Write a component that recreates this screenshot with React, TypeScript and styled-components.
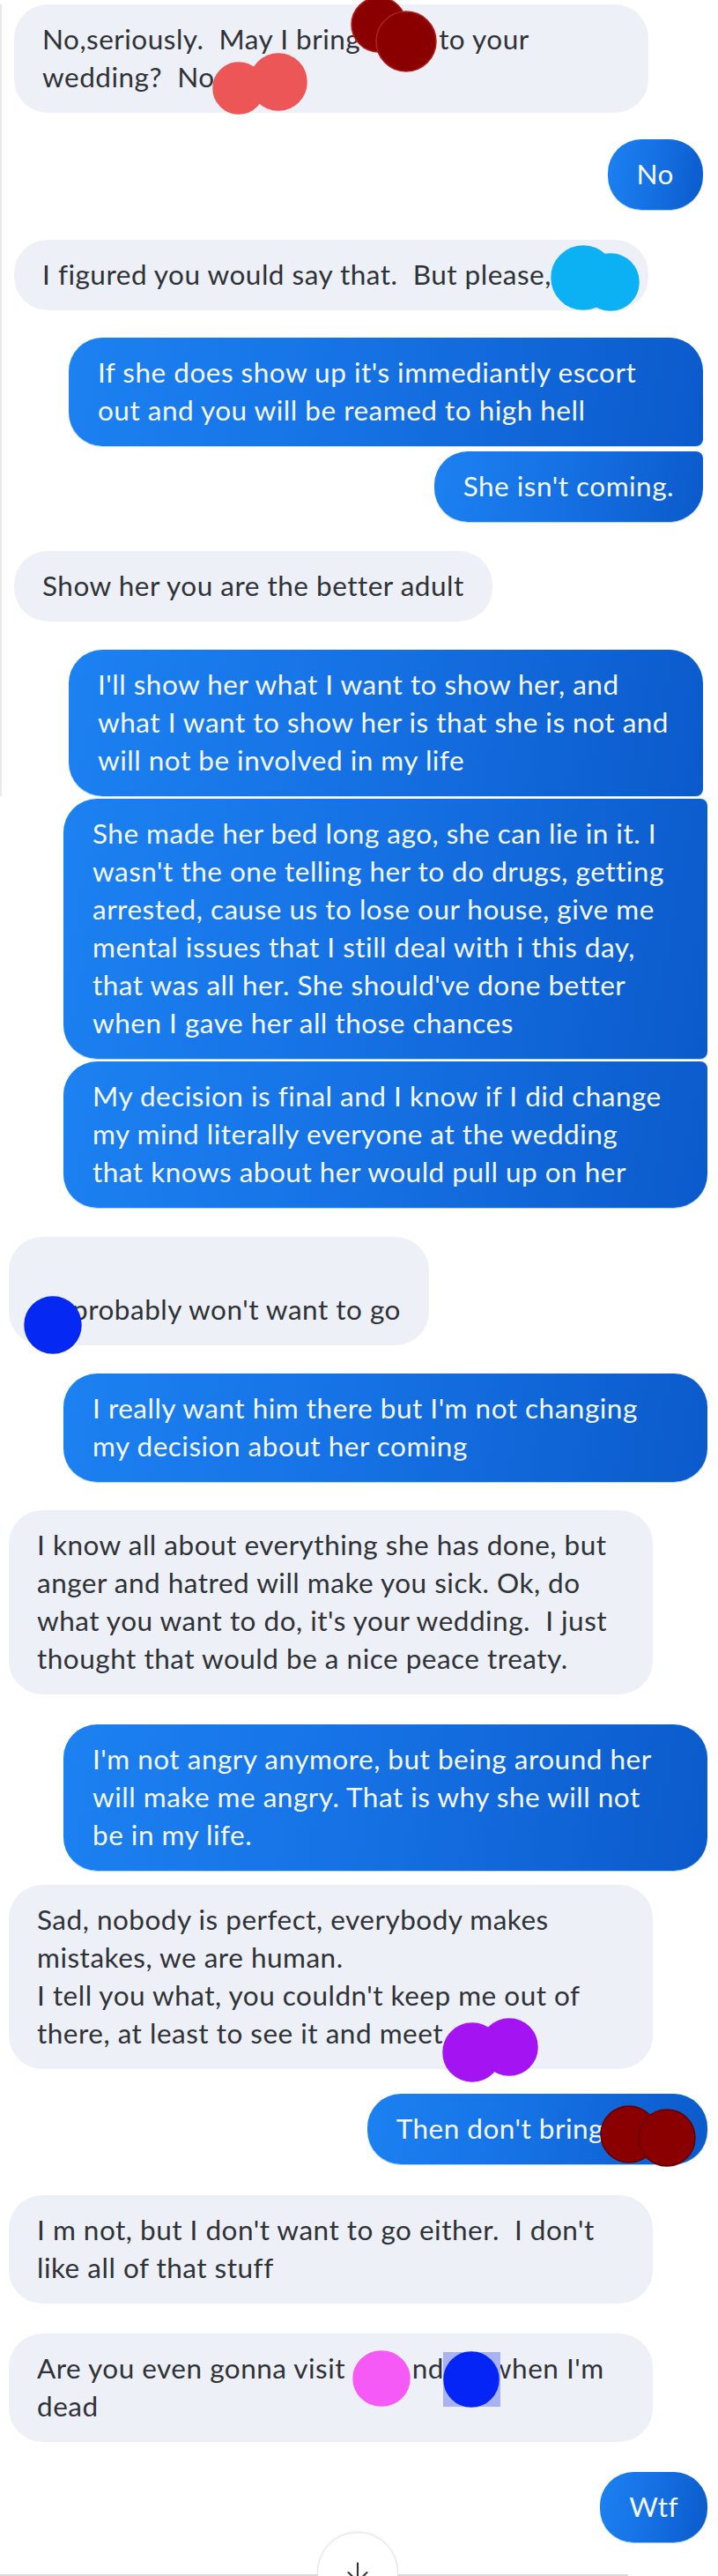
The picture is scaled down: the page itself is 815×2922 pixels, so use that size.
import React from 'react';
import styled, { createGlobalStyle } from 'styled-components';

const GlobalStyle = createGlobalStyle`
    html, body {
        margin: 0;
        padding: 0;
        background: #ffffff;
    }
    body {
        font-family: Lato, "Liberation Sans", sans-serif;
    }
`;

const Page = styled.div`
    width: 815px;
    height: 2922px;
    overflow: hidden;
    background: #ffffff;
    display: flex;
    flex-direction: column;
    padding-top: 5px;
    box-sizing: border-box;
`;

const Section = styled.section<{ $left: number; $right: number; $edge?: boolean }>`
    display: flex;
    flex-direction: column;
    padding: 0 ${(p) => p.$right}px 0 ${(p) => p.$left}px;
    box-shadow: ${(p) => (p.$edge ? 'inset 2px 0 0 #e9e9e9' : 'none')};
`;

const Row = styled.div<{ $out?: boolean; $gap: number }>`
    display: flex;
    justify-content: ${(p) => (p.$out ? 'flex-end' : 'flex-start')};
    margin-top: ${(p) => p.$gap}px;
`;

type Pos = 'single' | 'first' | 'middle' | 'last';

const corners: Record<Pos, string> = {
    single: '38px',
    first: '38px 38px 8px 38px',
    middle: '38px 8px 8px 38px',
    last: '38px 8px 38px 38px',
};

const Bubble = styled.div<{ $out?: boolean; $full?: boolean; $pos: Pos }>`
    position: relative;
    box-sizing: border-box;
    width: ${(p) => (p.$full ? 'calc(100% - 62px)' : 'auto')};
    padding: 18px ${(p) => (p.$out ? '33px' : '32px')} 19px;
    border-radius: ${(p) => corners[p.$pos]};
    background: ${(p) =>
        p.$out
            ? 'linear-gradient(100deg, #1c81f1 0%, #1672e4 45%, #0b5acb 100%)'
            : '#eef0f7'};
    box-shadow: ${(p) => (p.$out ? '0 1px 0 rgba(140, 200, 255, 0.7)' : 'none')};
    color: ${(p) => (p.$out ? '#f3f8ff' : '#2f3236')};
    font-size: 31.5px;
    letter-spacing: 0.5px;
    line-height: 43px;
`;

const Line = styled.div`
    white-space: pre;
`;

const Mark = styled.span<{ $w: number }>`
    display: inline-block;
    position: relative;
    width: ${(p) => p.$w}px;
    height: 0;
    vertical-align: top;
`;

const Scribble = styled.svg`
    position: absolute;
    left: 0;
    top: 0;
    overflow: visible;
    z-index: 1;
`;

type Dot = { x: number; y: number; r: number; ry?: number };

interface RedactProps {
    w: number;
    color: string;
    edge?: string;
    dots: Dot[];
    box?: { x: number; y: number; w: number; h: number };
}

const Redact: React.FC<RedactProps> = ({ w, color, edge, dots, box }) => (
    <Mark $w={w}>
        <Scribble width="1" height="1">
            {box && <rect x={box.x} y={box.y} width={box.w} height={box.h} fill="#aab3f1" />}
            {dots.map((d, i) => (
                <ellipse
                    key={i}
                    cx={d.x}
                    cy={d.y}
                    rx={d.r}
                    ry={d.ry ?? d.r}
                    fill={color}
                    stroke={edge ?? color}
                    strokeWidth={1.5}
                />
            ))}
        </Scribble>
    </Mark>
);

const Footer = styled.div`
    position: relative;
    flex: 1;
    display: flex;
    align-items: flex-end;
`;

const Rule = styled.div`
    width: 713px;
    height: 2px;
    background: #dadada;
`;

const ScrollButton = styled.div`
    position: absolute;
    left: 360px;
    top: -12px;
    width: 92px;
    height: 92px;
    box-sizing: border-box;
    border-radius: 50%;
    background: #ffffff;
    border: 1px solid #e3e3e3;
    box-shadow: 0 -1px 3px rgba(0, 0, 0, 0.06);
    display: flex;
    align-items: center;
    justify-content: center;
    z-index: 2;
`;

const DownArrow = () => (
    <svg width="36" height="36" viewBox="0 0 24 24" fill="none" stroke="#333" strokeWidth="1.4" strokeLinecap="round" strokeLinejoin="round">
        <path d="M12 5v14" />
        <path d="m19 12-7 7-7-7" />
    </svg>
);

interface Msg {
    out?: boolean;
    full?: boolean;
    pos?: Pos;
    gap: number;
    lines: React.ReactNode[];
}

const DARK_RED = '#8a0000';

const top: Msg[] = [
    {
        gap: 0,
        full: true,
        lines: [
            <>
                No,seriously.  May I bring
                <Redact w={89} color={DARK_RED} edge="#b02020" dots={[{ x: 21, y: 5, r: 31 }, { x: 52, y: 24, r: 34 }]} />
                to your
            </>,
            <>
                wedding?  No
                <Redact w={0} color="#ec5656" dots={[{ x: 27, y: 34, r: 29 }, { x: 72, y: 27, r: 32 }]} />
            </>,
        ],
    },
    { gap: 30, out: true, lines: ['No'] },
    {
        gap: 34,
        full: true,
        lines: [
            <>
                I figured you would say that.  But please,
                <Redact w={0} color="#0cb1f4" dots={[{ x: 36, y: 25, r: 36 }, { x: 67, y: 30, r: 32 }]} />
            </>,
        ],
    },
    {
        gap: 31,
        out: true,
        full: true,
        pos: 'first',
        lines: ["If she does show up it's immediantly escort", 'out and you will be reamed to high hell'],
    },
    { gap: 6, out: true, pos: 'last', lines: ["She isn't coming."] },
    { gap: 33, lines: ['Show her you are the better adult'] },
    {
        gap: 32,
        out: true,
        full: true,
        pos: 'first',
        lines: [
            "I'll show her what I want to show her, and",
            'what I want to show her is that she is not and',
            'will not be involved in my life',
        ],
    },
];

const bottom: Msg[] = [
    {
        gap: 3,
        out: true,
        full: true,
        pos: 'middle',
        lines: [
            'She made her bed long ago, she can lie in it. I',
            "wasn't the one telling her to do drugs, getting",
            'arrested, cause us to lose our house, give me',
            'mental issues that I still deal with i this day,',
            "that was all her. She should've done better",
            'when I gave her all those chances',
        ],
    },
    {
        gap: 3,
        out: true,
        full: true,
        pos: 'last',
        lines: [
            'My decision is final and I know if I did change',
            'my mind literally everyone at the wedding',
            'that knows about her would pull up on her',
        ],
    },
    {
        gap: 33,
        lines: [
            '\u00a0',
            <>
                <Redact w={40} color="#0528f2" dots={[{ x: 18, y: 39, r: 32 }]} />
                probably won't want to go
            </>,
        ],
    },
    {
        gap: 32,
        out: true,
        full: true,
        lines: ["I really want him there but I'm not changing", 'my decision about her coming'],
    },
    {
        gap: 32,
        full: true,
        lines: [
            'I know all about everything she has done, but',
            'anger and hatred will make you sick. Ok, do',
            "what you want to do, it's your wedding.  I just",
            'thought that would be a nice peace treaty.',
        ],
    },
    {
        gap: 34,
        out: true,
        full: true,
        lines: [
            "I'm not angry anymore, but being around her",
            'will make me angry. That is why she will not',
            'be in my life.',
        ],
    },
    {
        gap: 16,
        full: true,
        lines: [
            'Sad, nobody is perfect, everybody makes',
            'mistakes, we are human.',
            "I tell you what, you couldn't keep me out of",
            <>
                there, at least to see it and meet
                <Redact w={0} color="#a414f2" dots={[{ x: 33, y: 43, r: 33 }, { x: 75, y: 37, r: 32 }]} />
            </>,
        ],
    },
    {
        gap: 28,
        out: true,
        lines: [
            <>
                Then don't bring
                <Redact w={85} color={DARK_RED} edge="#650000" dots={[{ x: 29, y: 28, r: 32 }, { x: 72, y: 32, r: 32 }]} />
            </>,
        ],
    },
    {
        gap: 35,
        full: true,
        lines: ["I m not, but I don't want to go either.  I don't", 'like all of that stuff'],
    },
    {
        gap: 34,
        full: true,
        lines: [
            <>
                Are you even gonna visit{' '}
                <Redact w={67} color="#f55af6" dots={[{ x: 32, y: 33, r: 32, ry: 31 }]} />
                nd
                <Redact
                    w={52}
                    color="#0425f5"
                    box={{ x: -1, y: 3, w: 65, h: 62 }}
                    dots={[{ x: 31, y: 34, r: 31 }]}
                />
                when I'm
            </>,
            'dead',
        ],
    },
    { gap: 34, out: true, lines: ['Wtf'] },
];

const Thread: React.FC<{ items: Msg[] }> = ({ items }) => (
    <>
        {items.map((m, i) => (
            <Row key={i} $out={m.out} $gap={m.gap}>
                <Bubble $out={m.out} $full={m.full} $pos={m.pos ?? 'single'}>
                    {m.lines.map((l, j) => (
                        <Line key={j}>{l}</Line>
                    ))}
                </Bubble>
            </Row>
        ))}
    </>
);

const App: React.FC = () => (
    <Page>
        <GlobalStyle />
        <Section $left={16} $right={17} $edge>
            <Thread items={top} />
        </Section>
        <Section $left={10} $right={12}>
            <Thread items={bottom} />
        </Section>
        <Footer>
            <Rule />
            <ScrollButton>
                <DownArrow />
            </ScrollButton>
        </Footer>
    </Page>
);

export default App;
